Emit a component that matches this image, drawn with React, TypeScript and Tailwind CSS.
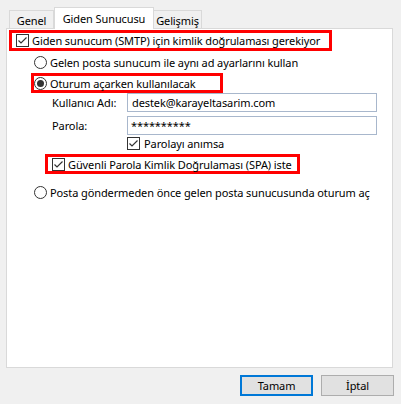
import React from "react";

const Check = ({ checked = true }) => (
  <span className="w-[13px] h-[13px] border border-[#333] bg-white flex items-center justify-center shrink-0">
    {checked && (
      <svg width="11" height="11" viewBox="0 0 11 11">
        <path d="M1.5 5.5 L4 8 L9.5 2.5" fill="none" stroke="#333" strokeWidth="1.2" />
      </svg>
    )}
  </span>
);

const Radio = ({ checked = false }) => (
  <span className="w-[13px] h-[13px] rounded-full border border-[#333] bg-white flex items-center justify-center shrink-0">
    {checked && <span className="w-[7px] h-[7px] rounded-full bg-[#333]" />}
  </span>
);

export default function App() {
  return (
    <div
      className="w-[401px] h-[404px] bg-[#f0f0f0] text-[11px] text-black leading-none overflow-hidden whitespace-nowrap tracking-[-0.1px]"
      style={{ fontFamily: '"Noto Sans", sans-serif' }}
    >
      {/* tabs */}
      <div className="flex items-end h-[28px] pl-[9px]">
        <div className="w-[45px] h-[18px] border border-b-0 border-[#d9d9d9] flex justify-center pt-[4px]">Genel</div>
        <div className="w-[100px] h-[22px] bg-white border border-b-0 border-[#d9d9d9] -mb-px relative z-10 flex justify-center pt-[5px]">
          Giden Sunucusu
        </div>
        <div className="w-[48px] h-[18px] border border-b-0 border-l-0 border-[#d9d9d9] flex justify-center pt-[4px]">Gelişmiş</div>
      </div>

      {/* panel */}
      <div className="ml-[6px] w-[387px] h-[340px] bg-white border border-[#d9d9d9] flex flex-col">
        <div className="mt-[1px] ml-[2px] w-[323px] h-[21px] border-[3px] border-[#ff0000] flex items-center pl-[4px] gap-[3px]">
          <Check />
          <span>Giden sunucum (SMTP) için kimlik doğrulaması gerekiyor</span>
        </div>

        <div className="h-[22px] ml-[27px] flex items-center gap-[3px]">
          <Radio />
          <span>Gelen posta sunucum ile aynı ad ayarlarını kullan</span>
        </div>

        <div className="ml-[24px] w-[192px] h-[20px] border-[3px] border-[#ff0000] flex items-center gap-[3px]">
          <Radio checked />
          <span>Oturum açarken kullanılacak</span>
        </div>

        <div className="flex items-center ml-[45px] h-[19px]">
          <span className="w-[75px]">Kullanıcı Adı:</span>
          <div className="w-[250px] h-[19px] border border-[#a8b7cc] flex items-center px-[4px]">
            destek@karayeltasarim.com
          </div>
        </div>

        <div className="flex items-center ml-[45px] h-[19px] mt-[4px]">
          <span className="w-[75px]">Parola:</span>
          <div className="w-[250px] h-[19px] border border-[#a8b7cc] flex items-center px-[3px]">
            **********
          </div>
        </div>

        <div className="flex items-center ml-[120px] h-[15px] mt-[1px] gap-[4px]">
          <Check />
          <span>Parolayı anımsa</span>
        </div>

        <div className="mt-[3px] ml-[38px] w-[255px] h-[20px] border-[3px] border-[#ff0000] flex items-center pl-[4px] gap-[3px]">
          <Check />
          <span>Güvenli Parola Kimlik Doğrulaması (SPA) iste</span>
        </div>

        <div className="mt-[8px] h-[20px] ml-[27px] flex items-center gap-[3px]">
          <Radio />
          <span>Posta göndermeden önce gelen posta sunucusunda oturum aç</span>
        </div>
      </div>

      {/* buttons */}
      <div className="flex justify-end gap-[8px] pr-[7px] mt-[7px]">
        <button className="w-[73px] h-[21px] bg-[#e1e1e1] border-2 border-[#0078d7] flex items-center justify-center">
          Tamam
        </button>
        <button className="w-[73px] h-[21px] bg-[#e1e1e1] border border-[#adadad] flex items-center justify-center">
          İptal
        </button>
      </div>
    </div>
  );
}
